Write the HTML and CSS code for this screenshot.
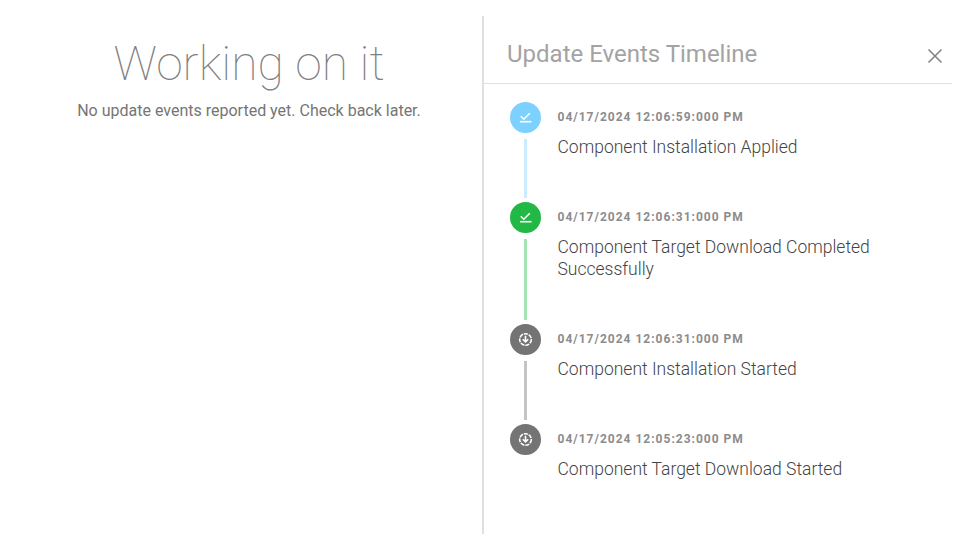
FILE: index.html
```html
<!DOCTYPE html>
<html lang="en">
<head>
	<meta charset="UTF-8">
	<title>Update Events Timeline</title>
	<link rel="stylesheet" href="styles.css">
</head>
<body>
<div class="page">
	<div class="status">
		<h1 class="status-title">Working on it</h1>
		<p class="status-text">No update events reported yet. Check back later.</p>
	</div>
	<div class="panel">
		<div class="panel-head">
			<h2 class="panel-title">Update Events Timeline</h2>
			<svg class="close" width="16" height="16" viewBox="0 0 16 16"><path d="M1.5 1.5l13 13M14.5 1.5l-13 13"/></svg>
		</div>
		<div class="timeline">
			<div class="event event-applied">
				<div class="marker">
					<div class="dot">
						<svg width="15" height="15" viewBox="0 0 15 15"><path class="stroke" d="M2.8 6.2l3 3 6-6"/><path class="stroke" d="M2 11.7h11.5"/></svg>
					</div>
					<div class="line"></div>
				</div>
				<div class="body">
					<div class="time">04/17/2024 12:06:59:000 PM</div>
					<div class="name">Component Installation Applied</div>
				</div>
			</div>
			<div class="event event-done">
				<div class="marker">
					<div class="dot">
						<svg width="15" height="15" viewBox="0 0 15 15"><path class="stroke" d="M2.8 6.2l3 3 6-6"/><path class="stroke" d="M2 11.7h11.5"/></svg>
					</div>
					<div class="line"></div>
				</div>
				<div class="body">
					<div class="time">04/17/2024 12:06:31:000 PM</div>
					<div class="name">Component Target Download Completed Successfully</div>
				</div>
			</div>
			<div class="event event-started">
				<div class="marker">
					<div class="dot">
						<svg width="15" height="15" viewBox="0 0 15 15"><circle class="stroke dashed" cx="7.5" cy="7.5" r="5.8"/><path class="stroke" d="M7.5 3.8v6M4.8 7.2l2.7 2.7 2.7-2.7"/></svg>
					</div>
					<div class="line"></div>
				</div>
				<div class="body">
					<div class="time">04/17/2024 12:06:31:000 PM</div>
					<div class="name">Component Installation Started</div>
				</div>
			</div>
			<div class="event event-started">
				<div class="marker">
					<div class="dot">
						<svg width="15" height="15" viewBox="0 0 15 15"><circle class="stroke dashed" cx="7.5" cy="7.5" r="5.8"/><path class="stroke" d="M7.5 3.8v6M4.8 7.2l2.7 2.7 2.7-2.7"/></svg>
					</div>
				</div>
				<div class="body">
					<div class="time">04/17/2024 12:05:23:000 PM</div>
					<div class="name">Component Target Download Started</div>
				</div>
			</div>
		</div>
	</div>
</div>
</body>
</html>
```

FILE: styles.css
```css
html, body { margin: 0; background: #fff; }
body { font-family: Roboto, "Liberation Sans", sans-serif; color: #666; }

.page { display: flex; width: 952px; height: 518px; padding: 16px 14px 16px 0; }

/* left side */
.status { width: 482px; text-align: center; padding: 16px 0 0 16px; box-sizing: border-box; }
.status-title { margin: 0; font-size: 48px; font-weight: 100; line-height: 63px; color: #808080; }
.status-text { margin: 4px 0 0; font-size: 16px; line-height: 24px; color: #757575; }

/* right side */
.panel { flex: 1; border-left: 2px solid #e0e0e0; }
.panel-head { display: flex; align-items: center; justify-content: space-between; height: 58px; padding: 9px 9px 0 23px; border-bottom: 1px solid #e0e0e0; }
.panel-title { margin: 0; font-size: 24px; font-weight: 400; color: #a3a3a3; }
.close { margin-top: 4px; }
.close path { stroke: #808080; stroke-width: 1.5; fill: none; }

.timeline { padding: 18px 0 0 26px; }
.event { display: flex; }
.marker { display: flex; flex-direction: column; align-items: center; width: 31px; margin-right: 16.5px; }
.dot { display: flex; align-items: center; justify-content: center; flex: none; width: 31px; height: 31px; border-radius: 50%; }
.line { flex: 1; width: 3px; margin: 6px 0 4px; }
.body { width: 340px; padding-bottom: 44px; }
.time { font-size: 12px; font-weight: 700; line-height: 31px; letter-spacing: 1px; color: #8c8c8c; }
.name { margin-top: 3px; font-size: 17.5px; font-weight: 300; line-height: 22px; color: #444; }

.stroke { fill: none; stroke: #fff; stroke-width: 1.6; }
.dashed { stroke-dasharray: 4 1; }

.event-applied .dot { background: #7dd1ff; }
.event-applied .line { background: #cbecff; }
.event-done .dot { background: #22b845; }
.event-done .line { background: #a3e4b2; }
.event-started .dot { background: #747474; }
.event-started .line { background: #c4c4c4; }
```
